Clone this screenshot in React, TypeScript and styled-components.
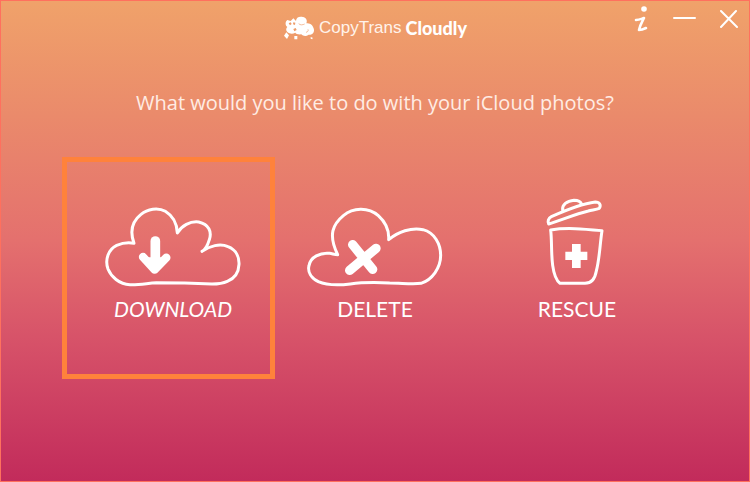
import React from "react";
import styled, { createGlobalStyle, css } from "styled-components";

const GlobalStyle = createGlobalStyle`
  *, *::before, *::after { box-sizing: border-box; }
  body { margin: 0; }
  button { font: inherit; color: inherit; background: none; border: 0; padding: 0; cursor: pointer; }
`;

const Window = styled.div`
  min-height: 100vh;
  display: flex;
  flex-direction: column;
  border: 1px solid #ff705e;
  color: #fff;
  font-family: "Open Sans", "Noto Sans", sans-serif;
  background: linear-gradient(180deg, #f0a26a 0%, #ea8a6b 24%, #e4706e 50%, #d75369 70%, #c22b5b 100%);
`;

const TitleBar = styled.header`
  display: grid;
  grid-template-columns: 1fr auto 1fr;
  align-items: start;
  height: 44px;
`;

const Brand = styled.div`
  grid-column: 2;
  display: flex;
  align-items: center;
  gap: 4px;
  padding-top: 14px;
  height: 40px;
  font: 17px/24px "Liberation Sans", Arial, sans-serif;
  color: #fff3ea;
`;

const BrandStrong = styled.strong`
  font: 900 18px/24px Lato, sans-serif;
  color: #fff;
`;

const Controls = styled.div`
  justify-self: end;
  display: flex;
  gap: 10px;
  padding: 3px 4px 0 0;
`;

const ControlButton = styled.button`
  width: 34px;
  height: 28px;
  display: grid;
  place-items: center;
`;

const Heading = styled.h1`
  margin: 43px 0 0;
  text-align: center;
  font-size: 20px;
  line-height: 30px;
  font-weight: 400;
  color: #ffece4;
`;

const Actions = styled.main`
  display: grid;
  grid-template-columns: repeat(3, 1fr);
  width: 81%;
  margin: 39px auto 0;
`;

const Action = styled.button<{ $selected?: boolean }>`
  position: relative;
  height: 222px;
  padding-top: 40px;
  display: flex;
  flex-direction: column;
  align-items: center;
  ${({ $selected }) =>
    $selected &&
    css`
      &::after {
        content: "";
        position: absolute;
        inset: 0 -1px 0 -10px;
        border: 5px solid #ff823b;
      }
    `}
`;

const Drawing = styled.svg`
  width: 140px;
  height: 92px;
  fill: none;
  stroke: #fff;
  stroke-width: 9;
  stroke-linecap: round;
  stroke-linejoin: round;
`;

const Label = styled.span<{ $slanted?: boolean }>`
  margin-top: 8px;
  font-family: Lato, sans-serif;
  font-size: 21px;
  line-height: 24px;
  font-style: ${({ $slanted }) => ($slanted ? "italic" : "normal")};
`;

function CloudMark() {
  return (
    <svg width="32" height="26" viewBox="27 24 96 78" aria-hidden="true">
      <path fill="#fff" d="M66 42C66 31 76 27 87 30C97 32 101 41 97 49C109 47 118 56 120 68C121 78 113 84 104 83C96 89 87 87 82 82C72 83 66 80 64 77C55 82 46 80 40 75C35 70 36 64 40 60C33 56 33 43 40 39L50 42L58 34Z" />
      <path fill="#ee9d6b" d="M44 49L50 46L53 51L48 55ZM58 46L64 47L63 54L57 52ZM58 66L65 63L68 69L61 73Z" />
      <path fill="none" stroke="#ee9d6b" strokeWidth="2" d="M74 50C79 55 86 54 92 51M96 76C101 75 104 71 102 67" />
      <path fill="#fff" d="M37 76L45 85L39 96L30 86ZM61 87L70 87L70 97L61 97ZM110 90L116 92L115 97L110 95Z" />
    </svg>
  );
}

function DownloadCloud() {
  return (
    <Drawing viewBox="25 -9 420 276" aria-hidden="true">
      <path d="M118 130C104 91 115 62 139 43C158 27 190 21 212 34C235 48 247 73 248 99C261 77 286 63 312 66C343 73 352 96 344 119C339 136 332 149 322 154C345 138 376 129 400 140C424 149 434 171 433 193C432 218 420 235 398 244C383 251 370 252 352 252L270 249L185 248C156 250 134 255 106 254C73 253 49 229 40 207C30 179 41 148 66 136C83 129 101 127 118 130Z" />
      <path strokeWidth="29" d="M182 123V196" />
      <path strokeWidth="25" d="M145 171L180 209L215 173" />
      <path fill="#fff" stroke="none" d="M156 172H208L190 214H173Z" />
    </Drawing>
  );
}

function DeleteCloud() {
  return (
    <Drawing viewBox="15 6 420 276" aria-hidden="true">
      <path d="M113 179C84 119 98 88 131 61C158 38 205 35 235 62C257 82 268 105 266 134C294 111 334 96 369 104C404 113 422 148 422 181C422 219 396 255 363 265C338 269 304 264 269 264C228 262 187 262 151 267C118 271 80 271 55 260C34 249 22 231 27 212C31 186 61 172 89 175C97 176 105 179 113 179Z" />
      <path strokeWidth="28" d="M158 149L218 223M228 160L149 226" />
    </Drawing>
  );
}

function RescueBin() {
  return (
    <Drawing viewBox="-54 21 420 276" aria-hidden="true">
      <path d="M71 102C67 95 70 84 79 80C121 61 166 42 211 36C224 36 229 45 223 55C213 59 199 60 190 63C151 72 108 91 71 102ZM113 60C111 44 125 33 147 31C161 31 167 35 170 43" />
      <path d="M77 120C124 112 177 117 231 122C225 159 224 205 214 243C210 266 200 280 180 280L105 280C91 269 86 248 83 226C78 190 81 152 77 120Z" />
      <path fill="#fff" stroke="none" d="M141 162H167V185H187V210H167V234H141V210H121V185H141Z" />
    </Drawing>
  );
}

export default function App() {
  return (
    <>
      <GlobalStyle />
      <Window>
        <TitleBar>
          <Brand>
            <CloudMark />
            <span>CopyTrans</span>
            <BrandStrong>Cloudly</BrandStrong>
          </Brand>
          <Controls>
            <ControlButton aria-label="About">
              <svg width="16" height="28" viewBox="0 0 16 28" fill="none" stroke="#fff" strokeWidth="2.6" strokeLinecap="round" strokeLinejoin="round" aria-hidden="true">
                <circle cx="12" cy="5" r="2.8" fill="#fff" stroke="none" />
                <path d="M4 16C7 16 9 15 12 14C10 18 8 21 7 26C10 26 12 25 14 24" />
              </svg>
            </ControlButton>
            <ControlButton aria-label="Minimize">
              <svg width="26" height="28" viewBox="0 0 26 28" stroke="#fff" strokeWidth="2" strokeLinecap="round" aria-hidden="true">
                <path d="M3 14H24" />
              </svg>
            </ControlButton>
            <ControlButton aria-label="Close">
              <svg width="20" height="28" viewBox="0 0 20 28" stroke="#fff" strokeWidth="2" strokeLinecap="round" aria-hidden="true">
                <path d="M3 7L19 23M18 7L3 23" />
              </svg>
            </ControlButton>
          </Controls>
        </TitleBar>
        <Heading>What would you like to do with your iCloud photos?</Heading>
        <Actions>
          <Action $selected>
            <DownloadCloud />
            <Label $slanted>DOWNLOAD</Label>
          </Action>
          <Action>
            <DeleteCloud />
            <Label>DELETE</Label>
          </Action>
          <Action>
            <RescueBin />
            <Label>RESCUE</Label>
          </Action>
        </Actions>
      </Window>
    </>
  );
}
